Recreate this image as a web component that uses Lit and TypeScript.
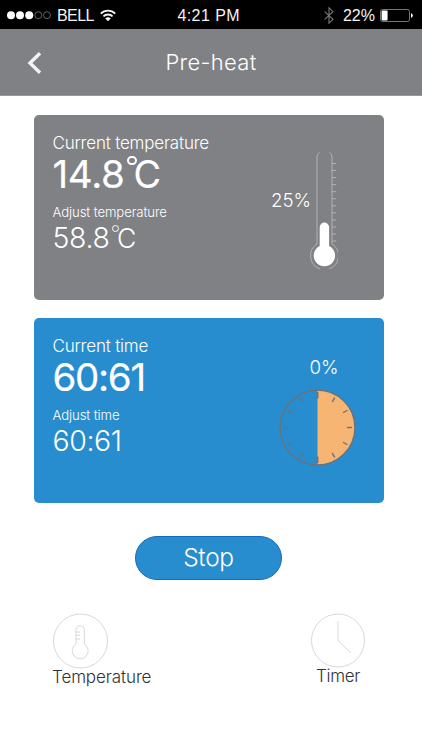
import { LitElement, html, svg, css } from "lit";
import { customElement, property } from "lit/decorators.js";

@customElement("status-bar")
class StatusBar extends LitElement {
  static styles = css`
    :host { display: grid; grid-template-columns: 1fr auto 1fr; align-items: center; height: 29px; background: #000; color: #f4f4f4;
      font: 16px/29px "Liberation Sans", Arial, sans-serif; padding: 0 9px 0 6px; box-sizing: border-box; }
    .side { display: flex; align-items: center; height: 29px; }
    .right { justify-content: flex-end; }
    svg { display: block; flex: none; }
    .carrier { margin-left: 6px; letter-spacing: -0.6px; width: 38px; white-space: nowrap; padding-top: 1px; }
    .wifi { margin-left: 5px; }
    .clock { padding: 1px 1.5px 0 0; letter-spacing: 0.45px; }
    .level { margin: 0 5px 0 9px; padding-top: 1px; }
  `;
  render() {
    return html`
      <div class="side">
        <svg width="45" height="10" viewBox="0 0 45 10">
          ${[5, 14, 23.2].map((x) => svg`<circle cx=${x} cy="5.2" r="4" fill="#fff" />`)}
          ${[32.3, 41].map((x) => svg`<circle cx=${x} cy="5.2" r="3.5" fill="none" stroke="#777" stroke-width=".8" />`)}
        </svg>
        <span class="carrier">BELL</span>
        <svg class="wifi" width="16" height="13" viewBox="0 0 16 13" fill="none" stroke="#f4f4f4" stroke-width="1.8">
          <path d="M.8 4.6a10.2 10.2 0 0 1 14.4 0M3.4 7.4a6.5 6.5 0 0 1 9.2 0" />
          <path d="M8 12.2 5.2 9.5a4 4 0 0 1 5.6 0z" fill="#f4f4f4" stroke="none" />
        </svg>
      </div>
      <span class="clock">4:21 PM</span>
      <div class="side right">
        <svg width="10" height="17" viewBox="0 0 10 17" fill="none" stroke="#777" stroke-width="1.1">
          <path d="M.7 4.6 9 12.3 5 16.2V.8l4 3.9L.7 12.4" />
        </svg>
        <span class="level">22%</span>
        <svg width="33" height="13" viewBox="0 0 33 13">
          <rect x=".5" y=".5" width="29" height="12" rx="2" fill="none" stroke="#777" />
          <rect x="1.6" y="1.6" width="6" height="9.8" rx=".8" fill="#fff" />
          <path d="M31 4.3q1.8.5 1.8 2.2T31 8.7z" fill="#fff" />
        </svg>
      </div>
    `;
  }
}

@customElement("reading-card")
class ReadingCard extends LitElement {
  @property() name = "";
  @property() current = "";
  @property() target = "";
  @property() unit = "";
  static styles = css`
    :host { display: flex; justify-content: space-between; box-sizing: border-box; width: 350px; height: 185px; border-radius: 5px;
      padding: 16px 0 0 18.5px; color: #fff; font-family: Inter, sans-serif; white-space: nowrap; }
    .label { font-size: 17px; line-height: 21px; padding: 1.5px 0 0; font-weight: 300; letter-spacing: -0.19px; }
    .big { display: flex; font-size: 38.5px; line-height: 41px; height: 41px; font-weight: 400; letter-spacing: -1.3px; -webkit-text-stroke: 0.2px #fff; }
    :host([unit]) .big { letter-spacing: -0.3px; }
    .small { font-size: 13.2px; line-height: 17px; font-weight: 300; margin-top: 9.5px; letter-spacing: -0.12px; }
    .value { display: flex; font-size: 28.5px; line-height: 34px; font-weight: 300; letter-spacing: -0.4px; }
    .deg { border: 2.6px solid currentColor; border-radius: 50%; box-sizing: border-box; width: 9.5px; height: 9.5px; margin: 2px -3px 0 2.5px; }
    .value .deg { border-width: 1.4px; width: 7px; height: 7px; margin: 4px -2px 0 2.5px; }
    .c { font-weight: 400; font-size: 0.98em; }
    .value .c { font-weight: 300; font-size: 0.93em; }
  `;
  reading(v: string) {
    return html`<span>${v}</span>${this.unit ? html`<i class="deg"></i><span class="c">${this.unit}</span>` : ""}`;
  }
  render() {
    return html`
      <div>
        <div class="label">Current ${this.name}</div>
        <div class="big">${this.reading(this.current)}</div>
        <div class="small">Adjust ${this.name}</div>
        <div class="value">${this.reading(this.target)}</div>
      </div>
      <slot></slot>
    `;
  }
}

@customElement("app-root")
class AppRoot extends LitElement {
  static styles = css`
    :host { display: block; width: 422px; height: 750px; overflow: hidden; background: #fff; font-family: Inter, sans-serif; }
    header { display: grid; grid-template-columns: 60px 1fr 60px; align-items: center; height: 67px; background: #808184; color: #fff; border-bottom: 1px solid #98999b; box-sizing: border-box; }
    header svg { margin: 1px 0 0 27px; display: block; }
    h1 { margin: 0; font-size: 22px; line-height: 30px; font-weight: 300; text-align: center; letter-spacing: 0.3px; }
    main { display: flex; flex-direction: column; align-items: flex-start; padding: 19px 34px 0; }
    svg { display: block; }
    .heat { background: #808184; }
    .time { background: #278dce; margin-top: 18px; }
    .gauge { display: flex; align-items: flex-start; padding: 20px 46px 0 0; }
    .gauge span { font-size: 18.7px; line-height: 24px; font-weight: 300; margin: 38px -1px 0 0; }
    .dial { display: flex; flex-direction: column; align-items: center; padding: 22px 28px 0 0; }
    .dial span { font-size: 18.7px; line-height: 24px; font-weight: 300; margin: 0 0 8.5px 13px; }
    button { width: 147px; height: 44px; margin: 33px 0 0 101px; padding: 0 0 2px; border: 1.5px solid #1769bd; border-radius: 22px; background: #278dce; color: #fff; font: 300 24.5px/38px Inter, sans-serif; letter-spacing: -0.3px; }
    nav { display: flex; justify-content: space-between; width: 313px; margin: 33px 0 0 18px; color: #333; font-size: 17px; line-height: 20px; font-weight: 300; letter-spacing: -0.1px; }
    .item { display: flex; flex-direction: column; }
    .item div { margin-top: -2px; }
    .timer { align-items: center; letter-spacing: -0.35px; }
  `;
  render() {
    return html`
      <status-bar></status-bar>
      <header>
        <svg width="16" height="22" viewBox="0 0 16 22" fill="none" stroke="#f3f3f3" stroke-width="3.4"><path d="M13 1.2 3 11l10 9.8" /></svg>
        <h1>Pre-heat</h1>
      </header>
      <main>
        <reading-card class="heat" name="temperature" current="14.8" target="58.8" unit="C">
          <div class="gauge">
            <span>25%</span>
            <svg width="28" height="120" viewBox="0 0 28 120" fill="none" stroke="#b0b1b3" stroke-width="1">
              <path d="M9.500 1.500Q7 2.500 7 6V93A14 14 0 0 0 10 118M19.500 1.500Q22 2.500 22 6V93A14 14 0 0 1 19 118" />
              <path d=${Array.from({ length: 12 }, (_, i) => `M22 ${12.5 + i * 7.05}h4.200`).join("")} />
              <path d="M9.700 94.900V76.200a4.700 4.700 0 0 1 9.400 0V94.900a10.700 10.700 0 1 1-9.400 0z" fill="#fff" stroke="none" />
            </svg>
          </div>
        </reading-card>
        <reading-card class="time" name="time" current="60:61" target="60:61">
          <div class="dial">
            <span>0%</span>
            <svg width="77" height="77" viewBox="0 0 77 77" fill="none" stroke="#6b7178">
              <path d="M38.500 1a37.500 37.500 0 0 1 0 75z" fill="#f7b573" stroke="none" />
              <circle cx="38.500" cy="38.500" r="37.400" stroke-width="1.300" />
              ${Array.from({ length: 12 }, (_, i) => svg`<path d="M38.500 ${i % 6 ? 4 : 3}v${i % 6 ? 5 : 6.5}" stroke-width=${i % 6 ? 1.4 : 1.9} transform="rotate(${i * 30} 38.500 38.500)" />`)}
            </svg>
          </div>
        </reading-card>
        <button>Stop</button>
        <nav>
          <div class="item">
            <svg width="56" height="56" viewBox="0 0 56 56" fill="none" stroke="#d9d9d9">
              <circle cx="28.500" cy="28" r="27" />
              <path d="M24 31V17a4.200 4.200 0 0 1 8.400 0v14a8 8 0 1 1-8.400 0zM24 19h4M24 22.500h4M24 26h4" />
            </svg>
            <div>Temperature</div>
          </div>
          <div class="item timer">
            <svg width="54" height="55" viewBox="0 0 54 55" fill="none" stroke="#d9d9d9">
              <circle cx="27" cy="27.500" r="26.500" />
              <path d="M27 8v19.500l13 12.500" />
            </svg>
            <div>Timer</div>
          </div>
        </nav>
      </main>
    `;
  }
}
